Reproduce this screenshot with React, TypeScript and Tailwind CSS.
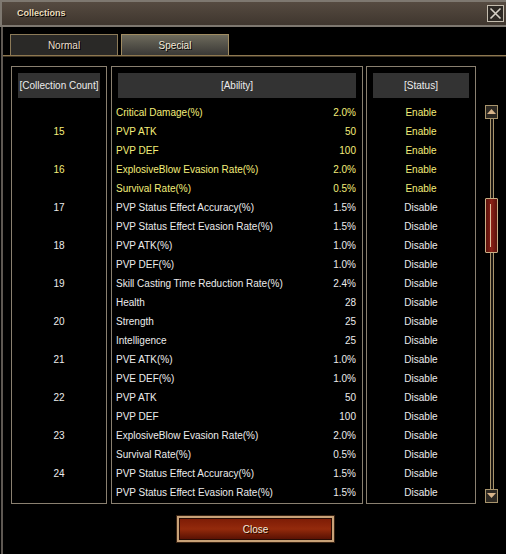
const rows = [
  { count: '', name: 'Critical Damage(%)', value: '2.0%', on: true },
  { count: '15', name: 'PVP ATK', value: '50', on: true },
  { count: '', name: 'PVP DEF', value: '100', on: true },
  { count: '16', name: 'ExplosiveBlow Evasion Rate(%)', value: '2.0%', on: true },
  { count: '', name: 'Survival Rate(%)', value: '0.5%', on: true },
  { count: '17', name: 'PVP Status Effect Accuracy(%)', value: '1.5%', on: false },
  { count: '', name: 'PVP Status Effect Evasion Rate(%)', value: '1.5%', on: false },
  { count: '18', name: 'PVP ATK(%)', value: '1.0%', on: false },
  { count: '', name: 'PVP DEF(%)', value: '1.0%', on: false },
  { count: '19', name: 'Skill Casting Time Reduction Rate(%)', value: '2.4%', on: false },
  { count: '', name: 'Health', value: '28', on: false },
  { count: '20', name: 'Strength', value: '25', on: false },
  { count: '', name: 'Intelligence', value: '25', on: false },
  { count: '21', name: 'PVE ATK(%)', value: '1.0%', on: false },
  { count: '', name: 'PVE DEF(%)', value: '1.0%', on: false },
  { count: '22', name: 'PVP ATK', value: '50', on: false },
  { count: '', name: 'PVP DEF', value: '100', on: false },
  { count: '23', name: 'ExplosiveBlow Evasion Rate(%)', value: '2.0%', on: false },
  { count: '', name: 'Survival Rate(%)', value: '0.5%', on: false },
  { count: '24', name: 'PVP Status Effect Accuracy(%)', value: '1.5%', on: false },
  { count: '', name: 'PVP Status Effect Evasion Rate(%)', value: '1.5%', on: false },
];

function ArrowButton({ down }: { down?: boolean }) {
  return (
    <div className="w-[13px] h-[14px] border border-[#a8946c] bg-[#2c2822] flex items-center justify-center">
      <svg width="9" height="6" viewBox="0 0 9 6">
        {down ? (
          <polygon points="0,0 9,0 4.5,5" fill="#d8b48a" />
        ) : (
          <polygon points="0,5 9,5 4.5,0" fill="#d8b48a" />
        )}
      </svg>
    </div>
  );
}

function Track({ className }: { className: string }) {
  return (
    <div className={`flex justify-center ${className}`}>
      <div className="w-[4px] h-full border-x border-[#a8946c] bg-[#1a1612]" />
    </div>
  );
}

export default function App() {
  return (
    <div className="w-[506px] h-[554px] bg-black overflow-hidden font-['Liberation_Sans',Arial,sans-serif] text-[10px] text-[#ececec]">
      {/* Title bar */}
      <div className="h-[27px] border-y-2 border-l-2 border-[#7e7870] bg-linear-to-b from-[#564b41] to-[#3f362e] flex items-center justify-between pl-[15px] pr-[2px]">
        <span className="text-[9px] font-bold text-[#eadcbc] [text-shadow:1px_1px_0_#000]">Collections</span>
        <div className="w-[17px] h-[17px] border border-[#c4bcae] bg-[#2e2924] flex items-center justify-center">
          <svg width="13" height="13" viewBox="0 0 13 13">
            <path d="M1.5 1.5 L11.5 11.5 M11.5 1.5 L1.5 11.5" stroke="#d6d0c6" strokeWidth="1.6" />
          </svg>
        </div>
      </div>

      <div className="pl-[1px] h-[527px]">
        <div className="h-full border-l-2 border-[#5e5852]">
          {/* Tabs */}
          <div className="flex pl-[7px] pt-[7px] gap-[3px]">
            <div className="w-[108px] h-[21px] border border-b-0 border-[#8c7a58] bg-[#2a2927] flex items-center justify-center text-[#eadfcb] [text-shadow:1px_1px_0_#000]">
              Normal
            </div>
            <div className="w-[108px] h-[21px] border border-b-0 border-[#a08c62] bg-linear-to-b from-[#6e6b5c] to-[#3a3936] flex items-center justify-center text-[#f2ead8] [text-shadow:1px_1px_0_#000]">
              Special
            </div>
          </div>
          <div className="h-[2px] bg-[#8e7850] border-b border-[#3e3424]" />

          {/* Table */}
          <div className="flex pl-[8px] mt-[9px]">
            <div className="w-[96px] h-[438px] border border-[#8a8070] px-[6px] pt-[6px]">
              <div className="h-[25px] bg-[#333333] flex items-center justify-center whitespace-nowrap">[Collection Count]</div>
              <div className="mt-[5px]">
                {rows.map((r, i) => (
                  <div key={i} className={`h-[19px] flex items-center justify-center ${r.on ? 'text-[#f4ee7a]' : 'text-[#ececec]'}`}>
                    {r.count}
                  </div>
                ))}
              </div>
            </div>

            <div className="ml-[4px] w-[252px] h-[438px] border border-[#8a8070] pt-[6px]">
              <div className="mx-[6px] h-[25px] bg-[#333333] flex items-center justify-center">[Ability]</div>
              <div className="mt-[5px] pl-[4px] pr-[6px]">
                {rows.map((r, i) => (
                  <div key={i} className={`h-[19px] flex items-center justify-between whitespace-nowrap ${r.on ? 'text-[#f4ee7a]' : 'text-[#ececec]'}`}>
                    <span>{r.name}</span>
                    <span>{r.value}</span>
                  </div>
                ))}
              </div>
            </div>

            <div className="ml-[3px] w-[110px] h-[438px] border border-[#8a8070] px-[6px] pt-[6px]">
              <div className="h-[25px] bg-[#333333] flex items-center justify-center">[Status]</div>
              <div className="mt-[5px]">
                {rows.map((r, i) => (
                  <div key={i} className={`h-[19px] flex items-center justify-center ${r.on ? 'text-[#f4ee7a]' : 'text-[#ececec]'}`}>
                    {r.on ? 'Enable' : 'Disable'}
                  </div>
                ))}
              </div>
            </div>

            {/* Scrollbar */}
            <div className="ml-[9px] w-[13px] pt-[39px] flex flex-col h-[437px]">
              <ArrowButton />
              <Track className="h-[79px]" />
              <div className="h-[55px] w-[13px] border border-[#c8ae84] rounded-[1px] bg-linear-to-r from-[#5a120c] via-[#8a2216] to-[#5a120c] flex justify-start pl-[4px] py-[5px]">
                <div className="w-[1px] h-full bg-[#e2c4a0]" />
              </div>
              <Track className="flex-1" />
              <ArrowButton down />
            </div>
          </div>

          {/* Close button */}
          <div className="mt-[11px] ml-[173px] w-[159px] h-[28px] border border-[#3a2414] bg-[#c8a278] p-[2px]">
            <div className="h-full border border-[#2a0c04] bg-linear-to-b from-[#7e1c06] via-[#942a0c] to-[#5a1204] flex items-center justify-center text-[#f4ead8] [text-shadow:1px_1px_0_#2a0800]">
              Close
            </div>
          </div>
        </div>
      </div>
    </div>
  );
}
